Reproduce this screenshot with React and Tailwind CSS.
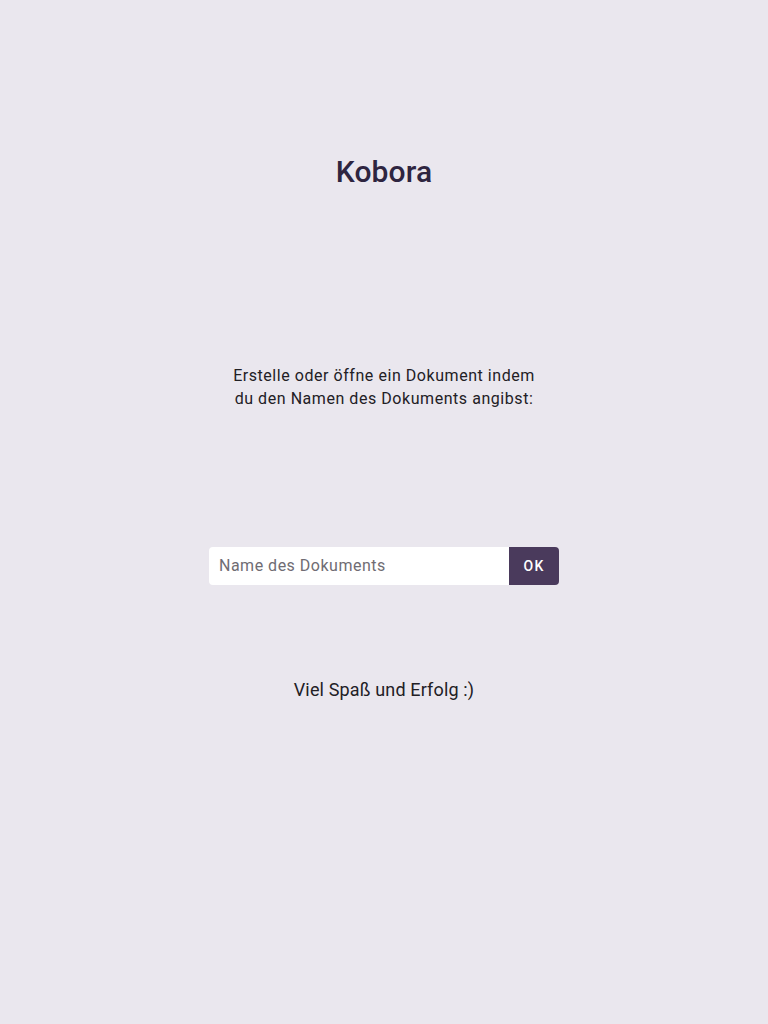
export default function App() {
  return (
    <div className="min-h-screen w-full bg-[#eae7ee] font-['Roboto',sans-serif] flex flex-col items-center text-center">
      <h1 className="mt-[154px] text-[30px] leading-[36px] font-medium tracking-[0.1px] text-[#2e2540]">Kobora</h1>

      <p className="mt-[174px] w-[314px] text-[16px] leading-[23px] tracking-[0.55px] text-[#222025]">
        Erstelle oder öffne ein Dokument indem du den Namen des Dokuments angibst:
      </p>

      <form className="mt-[137px] flex w-[350px] h-[38px]" onSubmit={(e) => e.preventDefault()}>
        <input
          type="text"
          placeholder="Name des Dokuments"
          className="flex-1 min-w-0 bg-white rounded-l-[4px] px-[10px] text-[16px] tracking-[0.5px] text-[#222] placeholder:text-[#6f6c73] outline-none"
        />
        <button
          type="submit"
          className="w-[50px] bg-[#4a3a5c] text-white text-[14px] font-medium tracking-[1.25px] rounded-r-[4px]"
        >
          OK
        </button>
      </form>

      <p className="mt-[93px] text-[18px] leading-[24px] tracking-[0.15px] text-[#222025]">Viel Spaß und Erfolg :)</p>
    </div>
  );
}
